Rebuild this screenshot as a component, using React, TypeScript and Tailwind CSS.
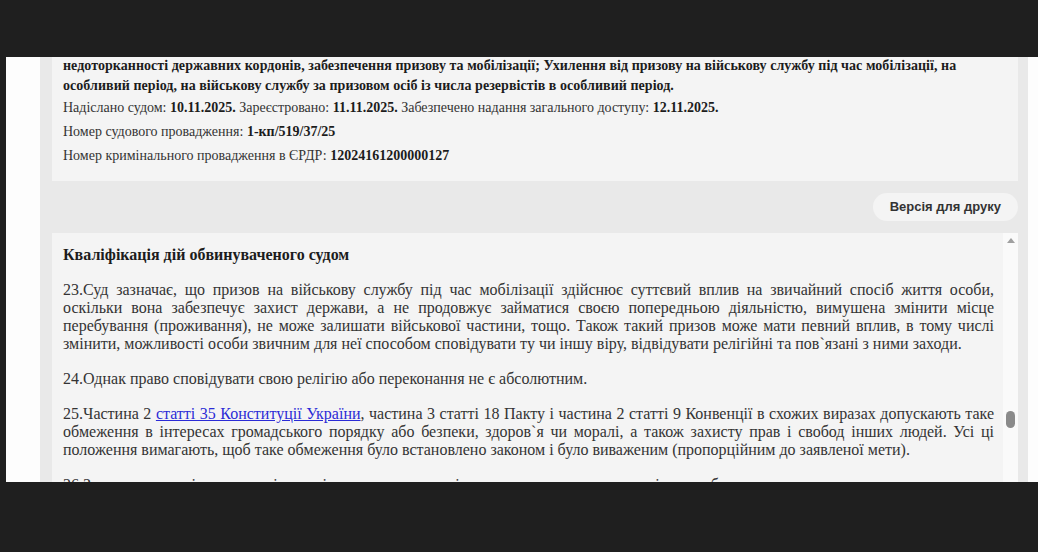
import React from 'react';

const serif = { fontFamily: '"Liberation Serif", "Times New Roman", "Noto Sans CJK SC", serif' };

interface JustifiedProps {
  lines: React.ReactNode[];
}

// each line is its own block so the breaks match the court page exactly
const Justified: React.FC<JustifiedProps> = ({ lines }) => (
  <div className="mb-[17px]">
    {lines.map((line, i) => (
      <div
        key={i}
        className={`whitespace-nowrap ${i < lines.length - 1 ? 'text-justify [text-align-last:justify]' : ''}`}
      >
        {line}
      </div>
    ))}
  </div>
);

const Caption: React.FC<{ label: string; value: string }> = ({ label, value }) => (
  <div className="mt-[4px]">
    {label} <b className="font-bold text-[#1c1c1c]">{value}</b>
  </div>
);

const App: React.FC = () => {
  const p23 = [
    '23.Суд зазначає, що призов на військову службу під час мобілізації здійснює суттєвий вплив на звичайний спосіб життя особи,',
    'оскільки вона забезпечує захист держави, а не продовжує займатися своєю попередньою діяльністю, вимушена змінити місце',
    'перебування (проживання), не може залишати військової частини, тощо. Також такий призов може мати певний вплив, в тому числі',
    'змінити, можливості особи звичним для неї способом сповідувати ту чи іншу віру, відвідувати релігійні та пов`язані з ними заходи.',
  ];

  const p25 = [
    <>
      25.Частина 2{' '}
      <a href="#" className="text-[#2b2bd6] underline">
        статті 35 Конституції України
      </a>
      , частина 3 статті 18 Пакту і частина 2 статті 9 Конвенції в схожих виразах допускають таке
    </>,
    'обмеження в інтересах громадського порядку або безпеки, здоров`я чи моралі, а також захисту прав і свобод інших людей. Усі ці',
    'положення вимагають, щоб таке обмеження було встановлено законом і було виваженим (пропорційним до заявленої мети).',
  ];

  return (
    <div className="w-[1038px] h-[552px] bg-[#1f1f1f] overflow-hidden flex flex-col">
      <div className="h-[57px] shrink-0" />

      <div className="h-[425px] shrink-0 pl-[6px] overflow-hidden">
        <div className="h-full bg-[#fdfdfd] pl-[34px] pr-[10px]">
          <div className="h-full bg-[#e9e9e9] pl-[12px] pr-[10px] flex flex-col overflow-hidden">
            {/* case info panel, scrolled past its top */}
            <div
              className="-mt-[1px] bg-[#f4f4f4] pl-[11px] pr-[10px] pb-[15px] text-[14px] leading-[20px] text-[#333]"
              style={serif}
            >
              <div className="font-bold text-[#1c1c1c] tracking-[0.05px]">
                <div className="whitespace-nowrap">
                  недоторканності державних кордонів, забезпечення призову та мобілізації; Ухилення від призову на військову службу під час мобілізації, на
                </div>
                <div className="whitespace-nowrap">
                  особливий період, на військову службу за призовом осіб із числа резервістів в особливий період.
                </div>
              </div>
              <div className="mt-[2px] whitespace-nowrap">
                Надіслано судом: <b className="text-[#1c1c1c]">10.11.2025.</b> Зареєстровано:{' '}
                <b className="text-[#1c1c1c]">11.11.2025.</b> Забезпечено надання загального доступу:{' '}
                <b className="text-[#1c1c1c]">12.11.2025.</b>
              </div>
              <Caption label="Номер судового провадження:" value="1-кп/519/37/25" />
              <Caption label="Номер кримінального провадження в ЄРДР:" value="12024161200000127" />
            </div>

            <div className="flex justify-end py-[12px] shrink-0">
              <button
                className="h-[28px] px-[17px] rounded-[14px] bg-[#f4f4f4] text-[13px] font-bold text-[#333]"
                style={{ fontFamily: '"Liberation Sans", Arial, sans-serif' }}
              >
                Версія для друку
              </button>
            </div>

            {/* decision text with its own scroll box */}
            <div className="flex-1 min-h-0 flex bg-[#f4f4f4] overflow-hidden">
              <div
                className="flex-1 min-w-0 pl-[11px] pr-[9px] pt-[13px] text-[16px] leading-[18px] text-[#333]"
                style={serif}
              >
                <div className="font-bold text-[#1c1c1c] mb-[17px]">Кваліфікація дій обвинуваченого судом</div>
                <Justified lines={p23} />
                <Justified lines={['24.Однак право сповідувати свою релігію або переконання не є абсолютним.']} />
                <Justified lines={p25} />
                <div className="whitespace-nowrap">
                  26.Зважаючи на зміст принципів, закріплених у нормах міжнародного права, суд перевіряє, чи було втручання
                </div>
              </div>
              <div className="relative w-[15px] shrink-0 bg-[#fafafa]">
                <div className="absolute left-[4px] top-[5px] w-0 h-0 border-l-[4px] border-r-[4px] border-b-[5px] border-l-transparent border-r-transparent border-b-[#a0a0a0]" />
                <div className="absolute left-[3px] top-[178px] w-[9px] h-[17px] rounded-full bg-[#8a8a8a]" />
              </div>
            </div>
          </div>
        </div>
      </div>

      <div className="flex-1" />
    </div>
  );
};

export default App;
